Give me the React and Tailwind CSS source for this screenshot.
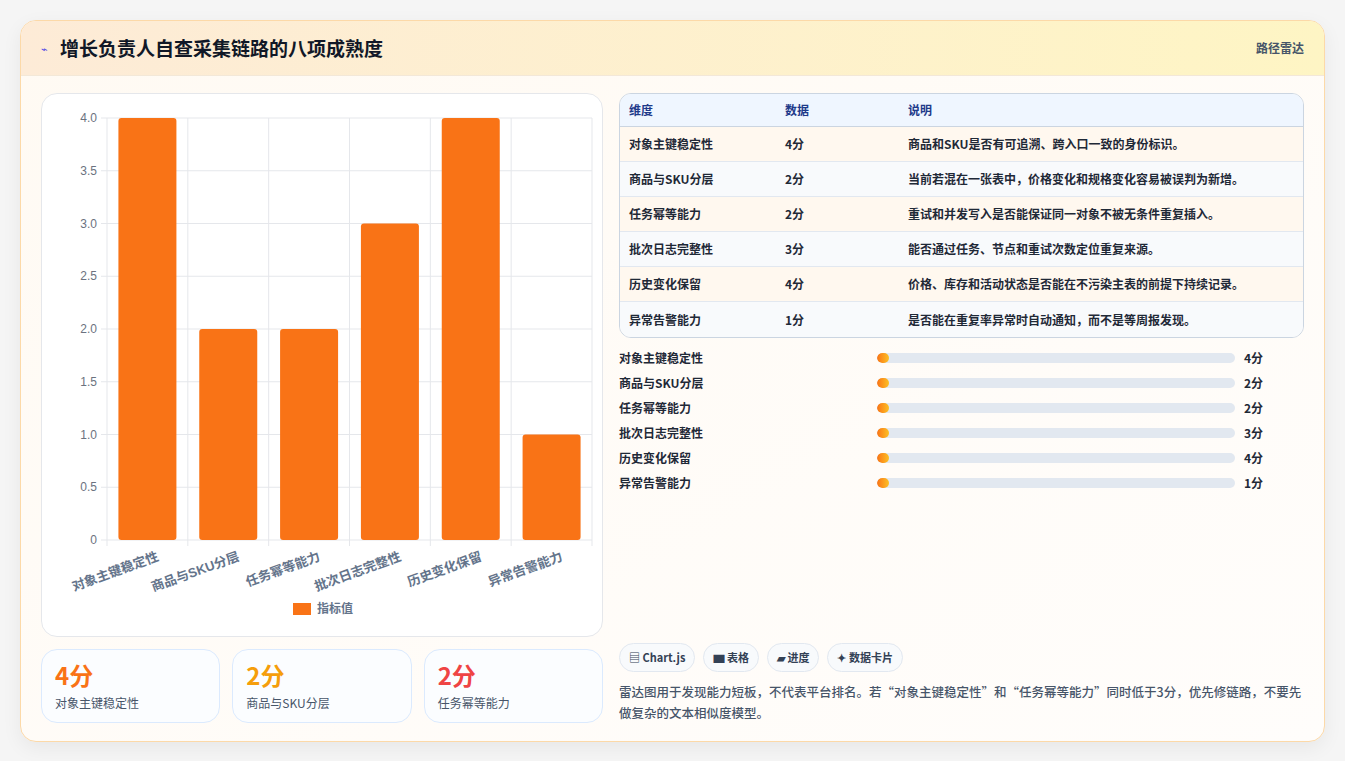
const dims = [
  ["对象主键稳定性", 4, "商品和SKU是否有可追溯、跨入口一致的身份标识。"],
  ["商品与SKU分层", 2, "当前若混在一张表中，价格变化和规格变化容易被误判为新增。"],
  ["任务幂等能力", 2, "重试和并发写入是否能保证同一对象不被无条件重复插入。"],
  ["批次日志完整性", 3, "能否通过任务、节点和重试次数定位重复来源。"],
  ["历史变化保留", 4, "价格、库存和活动状态是否能在不污染主表的前提下持续记录。"],
  ["异常告警能力", 1, "是否能在重复率异常时自动通知，而不是等周报发现。"],
];

function Chart() {
  const L = 65, T = 24, B = 446, R = 550;
  const sw = (R - L) / 6;
  const u = (B - T) / 4;
  const ticks = [0, 0.5, 1, 1.5, 2, 2.5, 3, 3.5, 4];
  return (
    <svg width="560" height="542" className="block" style={{ fontFamily: "'Liberation Sans','Noto Sans CJK SC',sans-serif" }}>
      {ticks.map((t) => (
        <g key={t}>
          <line x1={L - 6} x2={R} y1={B - t * u} y2={B - t * u} stroke="#e5e7eb" />
          <text x={L - 10} y={B - t * u + 4} textAnchor="end" fontSize="12" fill="#6b7280">
            {t === 0 ? "0" : t.toFixed(1)}
          </text>
        </g>
      ))}
      {Array.from({ length: 7 }).map((_, i) => (
        <line key={i} x1={L + i * sw} x2={L + i * sw} y1={T} y2={B + 6} stroke="#e5e7eb" />
      ))}
      {dims.map(([n, v], i) => {
        const cx = L + i * sw + sw / 2;
        return (
          <g key={n}>
            <rect x={cx - 29} y={B - v * u} width="58" height={v * u} rx="3" fill="#f97316" />
            <text
              transform={`translate(${cx + 12},${B + 20}) rotate(-20)`}
              textAnchor="end"
              fontSize="13"
              fontWeight="700"
              fill="#64748b"
            >
              {n}
            </text>
          </g>
        );
      })}
      <rect x="251" y="509" width="18" height="12" fill="#f97316" />
      <text x="275" y="519" fontSize="12" fill="#64748b" fontWeight="700">指标值</text>
    </svg>
  );
}

export default function App() {
  return (
    <div className="min-h-screen bg-[#f5f5f5] p-5 pb-5" style={{ fontFamily: "'Noto Sans CJK SC','Liberation Sans',sans-serif" }}>
      <div className="rounded-2xl border border-[#fcd9a8] bg-gradient-to-br from-[#fffaf3] to-[#fffdfb] overflow-hidden shadow-[0_6px_20px_rgba(0,0,0,0.06)]">
        <div className="h-[55px] flex items-center justify-between px-5 bg-gradient-to-r from-[#fdebd7] to-[#fef5c4] border-b border-[#f3e8d8]">
          <div className="flex items-center gap-3">
            <span className="text-[11px] text-[#4f46e5]">⌁</span>
            <span className="text-[19px] font-bold text-[#111827]">增长负责人自查采集链路的八项成熟度</span>
          </div>
          <span className="text-[12px] font-semibold text-[#475569]">路径雷达</span>
        </div>
        <div className="flex gap-4 px-5 pt-[17px] pb-[18px]">
          <div className="w-[562px] flex flex-col gap-3">
            <div className="h-[544px] rounded-2xl bg-white border border-[#e5e7eb]">
              <Chart />
            </div>
            <div className="grid grid-cols-3 gap-3">
              {[["4分", "text-[#f97316]", dims[0][0]], ["2分", "text-[#f59e0b]", dims[1][0]], ["2分", "text-[#ef4444]", dims[2][0]]].map(([v, c, n]) => (
                <div key={n} className="h-[74px] rounded-2xl border border-[#dbeafe] bg-[#fbfdff] px-[13px] pt-[10px]">
                  <div className={`text-[24px] font-bold leading-[30px] ${c}`}>{v}</div>
                  <div className="text-[12px] text-[#475569] mt-1">{n}</div>
                </div>
              ))}
            </div>
          </div>
          <div className="flex-1 flex flex-col">
            <div className="rounded-xl border border-[#cbd5e1] overflow-hidden text-[12px]">
              <div className="flex h-[33px] items-center bg-[#eff6ff] text-[#1e3a8a] font-bold border-b border-[#cbd5e1]">
                <div className="w-[165px] pl-[9px]">维度</div>
                <div className="w-[123px]">数据</div>
                <div>说明</div>
              </div>
              {dims.map(([n, v, d], i) => (
                <div key={n} className={`flex h-[35px] items-center text-[#1f2937] font-semibold ${i < 5 ? "border-b border-[#e2e8f0]" : ""} ${i % 2 === 0 ? "bg-[#fff8ef]" : "bg-[#f8fafc]"}`}>
                  <div className="w-[165px] pl-[9px]">{n}</div>
                  <div className="w-[123px]">{v}分</div>
                  <div>{d}</div>
                </div>
              ))}
            </div>
            <div className="mt-[7px] flex flex-col">
              {dims.map(([n, v]) => (
                <div key={n} className="h-[25px] flex items-center text-[12px] font-semibold text-[#1f2937]">
                  <div className="w-[258px]">{n}</div>
                  <div className="w-[358px] h-[10px] rounded-full bg-[#e2e8f0] overflow-hidden">
                    <div className="w-[12px] h-full rounded-full bg-gradient-to-r from-[#f97316] to-[#fbbf24]" />
                  </div>
                  <div className="ml-[9px] font-bold">{v}分</div>
                </div>
              ))}
            </div>
            <div className="mt-auto">
              <div className="flex gap-2">
                {["▤ Chart.js", "▆ 表格", "▰ 进度", "✦ 数据卡片"].map((t) => (
                  <span key={t} className="h-[29px] px-[9px] flex items-center rounded-full border border-[#e2e8f0] bg-[#f8fafc] text-[11px] font-semibold text-[#334155]">{t}</span>
                ))}
              </div>
              <p className="mt-[9px] text-[12.5px] leading-[21px] text-[#475569] font-medium">
                雷达图用于发现能力短板，不代表平台排名。若“对象主键稳定性”和“任务幂等能力”同时低于3分，优先修链路，不要先做复杂的文本相似度模型。
              </p>
            </div>
          </div>
        </div>
      </div>
    </div>
  );
}
